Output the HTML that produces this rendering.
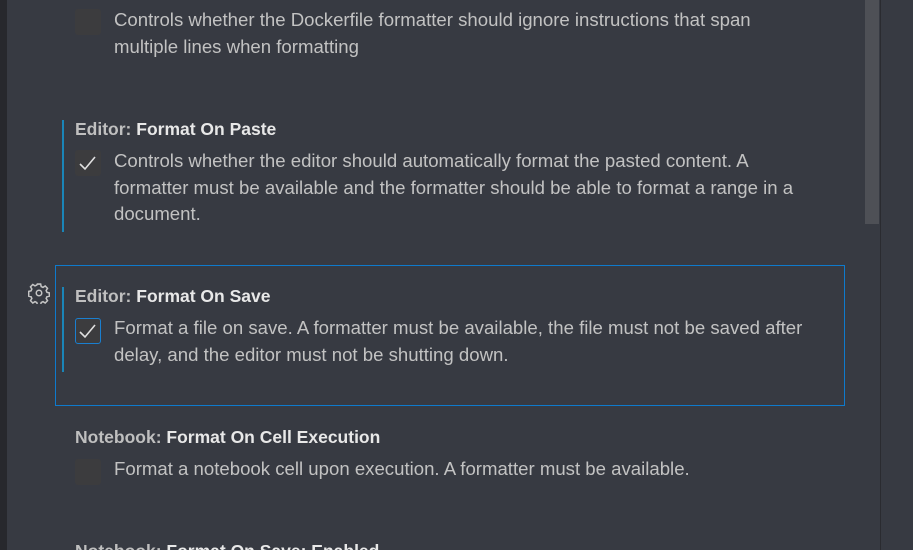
<!DOCTYPE html>
<html><head><style>
html,body{margin:0;width:913px;height:550px;overflow:hidden}
body{background:#373a42;font-family:"Liberation Sans",sans-serif;position:relative}
.l{position:absolute;left:0;top:0;width:7px;height:550px;background:#27282d}
.sb{position:absolute;left:865px;top:0;width:14px;height:224px;background:#4e5056}
.vl{position:absolute;left:880px;top:0;width:1px;height:550px;background:#2a2b30}
.t{position:absolute;left:75px;font-size:17.5px;font-weight:bold;color:#bfbfbf;white-space:nowrap}
.t b{color:#e8e8e8}
.d{position:absolute;left:114px;font-size:18.6px;color:#c2c2c2;white-space:nowrap;line-height:26.5px}
.cb{position:absolute;left:75px;width:26px;height:26px;border-radius:3px;background:#3c3c3e;box-sizing:border-box}
.bar{position:absolute;left:62px;width:2px;background:#1a85b8}
.focus{position:absolute;left:55px;top:265px;width:790px;height:141px;box-sizing:border-box;border:1px solid #0e7acc}
</style></head><body>
<div class="l"></div><div class="sb"></div><div class="vl"></div>
<div class="cb" style="top:9px"></div>
<div class="d" style="top:7px">Controls whether the Dockerfile formatter should ignore instructions that span<br>multiple lines when formatting</div>

<div class="bar" style="top:120px;height:112px"></div>
<div class="t" style="top:119px">Editor: <b>Format On Paste</b></div>
<div class="cb" style="top:150px"><svg width="26" height="26"><path d="M5 14 L10 19 L20 7" fill="none" stroke="#e0e0e0" stroke-width="1.6"/></svg></div>
<div class="d" style="top:148px">Controls whether the editor should automatically format the pasted content. A<br>formatter must be available and the formatter should be able to format a range in a<br>document.</div>

<div class="focus"></div>
<svg style="position:absolute;left:28px;top:282px" width="22" height="22" viewBox="0 0 16 16"><g fill="none" stroke="#c5c5c5" stroke-width="1.1"><circle cx="8" cy="8" r="2"/><path d="M6.8 1.5h2.4l.4 1.8 1.3.6 1.6-1 1.7 1.7-1 1.6.6 1.3 1.7.4v2.4l-1.7.4-.6 1.3 1 1.6-1.7 1.7-1.6-1-1.3.6-.4 1.7H6.8l-.4-1.7-1.3-.6-1.6 1-1.7-1.7 1-1.6-.6-1.3-1.7-.4V6.8l1.7-.4.6-1.3-1-1.6 1.7-1.7 1.6 1 1.3-.6z"/></g></svg>
<div class="bar" style="top:287px;height:85px"></div>
<div class="t" style="top:286px">Editor: <b>Format On Save</b></div>
<div class="cb" style="top:318px;border:1px solid #1a7fd0"><svg width="24" height="24"><path d="M4 13 L9 18 L19 6" fill="none" stroke="#e0e0e0" stroke-width="1.6"/></svg></div>
<div class="d" style="top:315px">Format a file on save. A formatter must be available, the file must not be saved after<br>delay, and the editor must not be shutting down.</div>

<div class="t" style="top:427px">Notebook: <b>Format On Cell Execution</b></div>
<div class="cb" style="top:459px"></div>
<div class="d" style="top:456px">Format a notebook cell upon execution. A formatter must be available.</div>

<div class="t" style="top:541px">Notebook: <b>Format On Save: Enabled</b></div>
</body></html>
